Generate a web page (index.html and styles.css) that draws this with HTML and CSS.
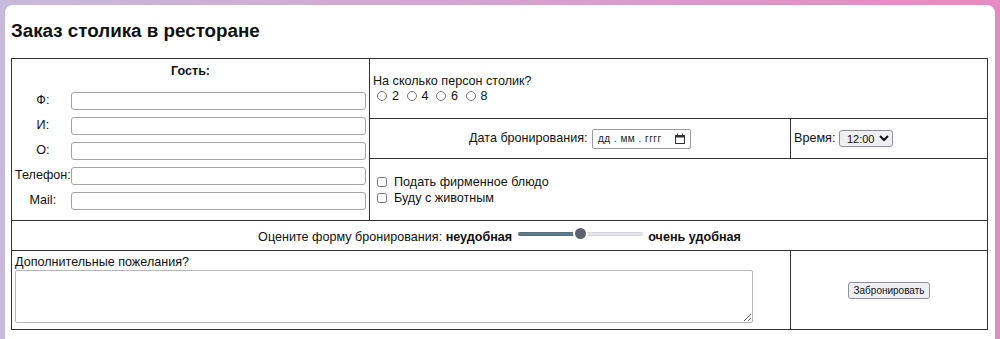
FILE: index.html
```html
<!DOCTYPE html>
<html lang="ru">
<head>
  <meta charset="UTF-8" />
  <title>Заказ столика в ресторане</title>
  <link rel="stylesheet" href="styles.css">
</head>
<body>
  <div class="card">
    <h1 class="title">Заказ столика в ресторане</h1>
    <form class="booking" onsubmit="return false">
      <table class="booking-table">
        <colgroup>
          <col class="col-guest">
          <col class="col-main">
          <col class="col-side">
        </colgroup>
        <tr class="row-persons">
          <td class="cell guest" rowspan="3">
            <div class="guest-title">Гость:</div>
            <table class="guest-fields">
              <tr><td class="field-label">Ф:</td><td><input type="text" class="field"></td></tr>
              <tr><td class="field-label">И:</td><td><input type="text" class="field"></td></tr>
              <tr><td class="field-label">О:</td><td><input type="text" class="field"></td></tr>
              <tr><td class="field-label">Телефон:</td><td><input type="text" class="field"></td></tr>
              <tr><td class="field-label">Mail:</td><td><input type="text" class="field"></td></tr>
            </table>
          </td>
          <td class="cell" colspan="2">
            На сколько персон столик?<br>
            <label class="opt"><input type="radio" name="persons" class="radio">2</label>
            <label class="opt"><input type="radio" name="persons" class="radio">4</label>
            <label class="opt"><input type="radio" name="persons" class="radio">6</label>
            <label class="opt"><input type="radio" name="persons" class="radio">8</label>
          </td>
        </tr>
        <tr class="row-date">
          <td class="cell center">
            Дата бронирования:
            <span class="date-box">
              <span class="date-text">дд . мм . гггг</span>
              <svg class="cal" width="12" height="12" viewBox="0 0 12 12">
                <rect x="1.5" y="2.5" width="9" height="8" fill="none" stroke="#333" stroke-width="1"/>
                <rect x="1.5" y="2.5" width="9" height="2" fill="#333"/>
                <rect x="3" y="0.5" width="1" height="2.5" fill="#333"/>
                <rect x="8" y="0.5" width="1" height="2.5" fill="#333"/>
              </svg>
            </span>
          </td>
          <td class="cell">
            Время: <select class="time"><option>12:00</option><option>13:00</option><option>14:00</option></select>
          </td>
        </tr>
        <tr class="row-extras">
          <td class="cell" colspan="2">
            <label class="check"><input type="checkbox" class="checkbox">Подать фирменное блюдо</label>
            <label class="check"><input type="checkbox" class="checkbox">Буду с животным</label>
          </td>
        </tr>
        <tr class="row-rate">
          <td class="cell center" colspan="3">
            Оцените форму бронирования: <b>неудобная</b> <input type="range" class="rate" min="0" max="100" value="50"> <b>очень удобная</b>
          </td>
        </tr>
        <tr class="row-notes">
          <td class="cell notes" colspan="2">
            Дополнительные пожелания?
            <textarea class="notes-box"></textarea>
          </td>
          <td class="cell center">
            <button class="submit">Забронировать</button>
          </td>
        </tr>
      </table>
    </form>
  </div>
</body>
</html>
```

FILE: styles.css
```css
html, body {
  margin: 0;
  padding: 0;
}

body {
  background: linear-gradient(to right, #c8badc, #e48bc3);
  font-family: "Liberation Sans", Arial, sans-serif;
  font-size: 12.6px;
  line-height: 15px;
  color: #111;
  padding: 5px 5px 0;
  height: 339px;
  box-sizing: border-box;
  overflow: hidden;
}

.card {
  background: #fff;
  border-radius: 8px 8px 0 0;
  padding: 0 7px 0 6px;
  height: 334px;
  box-sizing: border-box;
}

.title {
  font-size: 18.8px;
  line-height: 22px;
  margin: 0;
  padding: 15px 0 16px;
}

.booking-table {
  width: 100%;
  border-collapse: collapse;
  table-layout: fixed;
}

.col-guest { width: 358px; }
.col-main { width: 421px; }

.cell {
  border: 1px solid #333;
  padding: 3px 3px;
  vertical-align: middle;
}

.center {
  text-align: center;
}

.row-persons { height: 60px; }
.row-date { height: 40px; }
.row-extras { height: 62px; }
.row-rate { height: 30px; }
.row-notes { height: 79px; }

/* guest block */
.guest {
  vertical-align: top;
  padding-top: 5px;
}

.guest-title {
  font-weight: bold;
  text-align: center;
  margin-bottom: 9px;
}

.guest-fields {
  width: 100%;
  border-collapse: collapse;
}

.guest-fields tr {
  height: 25px;
}

.guest-fields td {
  padding: 0;
}

.field-label {
  width: 1%;
  white-space: nowrap;
  text-align: center;
}

.field {
  display: block;
  width: 100%;
  height: 18px;
  box-sizing: border-box;
  border: 1px solid #a3a3ab;
  border-radius: 3px;
  padding: 1px 3px;
  margin: 0;
}

/* persons */
.opt {
  white-space: nowrap;
}

.radio {
  width: 10px;
  height: 10px;
  margin: 0 5px 0 4px;
  vertical-align: -1px;
}

/* date / time */
.date-box {
  display: inline-flex;
  align-items: center;
  justify-content: space-between;
  width: 99px;
  height: 20px;
  box-sizing: border-box;
  border: 1px solid #9a9a9a;
  border-radius: 2px;
  padding: 0 4px 0 5px;
  margin-left: 1px;
  vertical-align: middle;
  text-align: left;
}

.date-text {
  font-size: 10px;
  letter-spacing: 0.5px;
  color: #222;
}

.cal {
  display: block;
}

.time {
  font-family: "Liberation Sans", Arial, sans-serif;
  font-size: 11px;
  width: 54px;
  height: 17px;
  padding: 0 0 0 3px;
  border: 1px solid #8f8f9d;
  border-radius: 3px;
  background: #efeff0;
  color: #111;
  vertical-align: middle;
}

/* extras */
.check {
  display: block;
  line-height: 16px;
}

.checkbox {
  width: 10px;
  height: 10px;
  margin: 0 7px 0 4px;
  vertical-align: -1px;
}

/* rating */
.rate {
  -webkit-appearance: none;
  appearance: none;
  width: 125px;
  height: 14px;
  margin: 0 2px 3px 2px;
  padding: 0;
  background: transparent;
}

.rate::-webkit-slider-runnable-track {
  height: 4px;
  border-radius: 2px;
  background: linear-gradient(to right, #5c7a87 50%, #e6e6ec 50%);
  box-shadow: inset 0 0 0 1px rgba(0, 0, 0, 0.08);
}

.rate::-webkit-slider-thumb {
  -webkit-appearance: none;
  width: 15px;
  height: 15px;
  margin-top: -5.5px;
  border-radius: 50%;
  background: #5f6070;
  border: 2px solid #fff;
  box-sizing: border-box;
}

/* notes */
.notes {
  vertical-align: top;
  padding-top: 4px;
}

.notes-box {
  display: block;
  width: 738px;
  height: 53px;
  box-sizing: border-box;
  border: 1px solid #b5b5bb;
  border-radius: 2px;
  margin: 0;
  resize: both;
}

.submit {
  font-family: "Liberation Sans", Arial, sans-serif;
  font-size: 10px;
  padding: 1px 4px;
  height: 17px;
  border: 1px solid #8f8f9d;
  border-radius: 3px;
  background: #efeff0;
  color: #111;
}
```
